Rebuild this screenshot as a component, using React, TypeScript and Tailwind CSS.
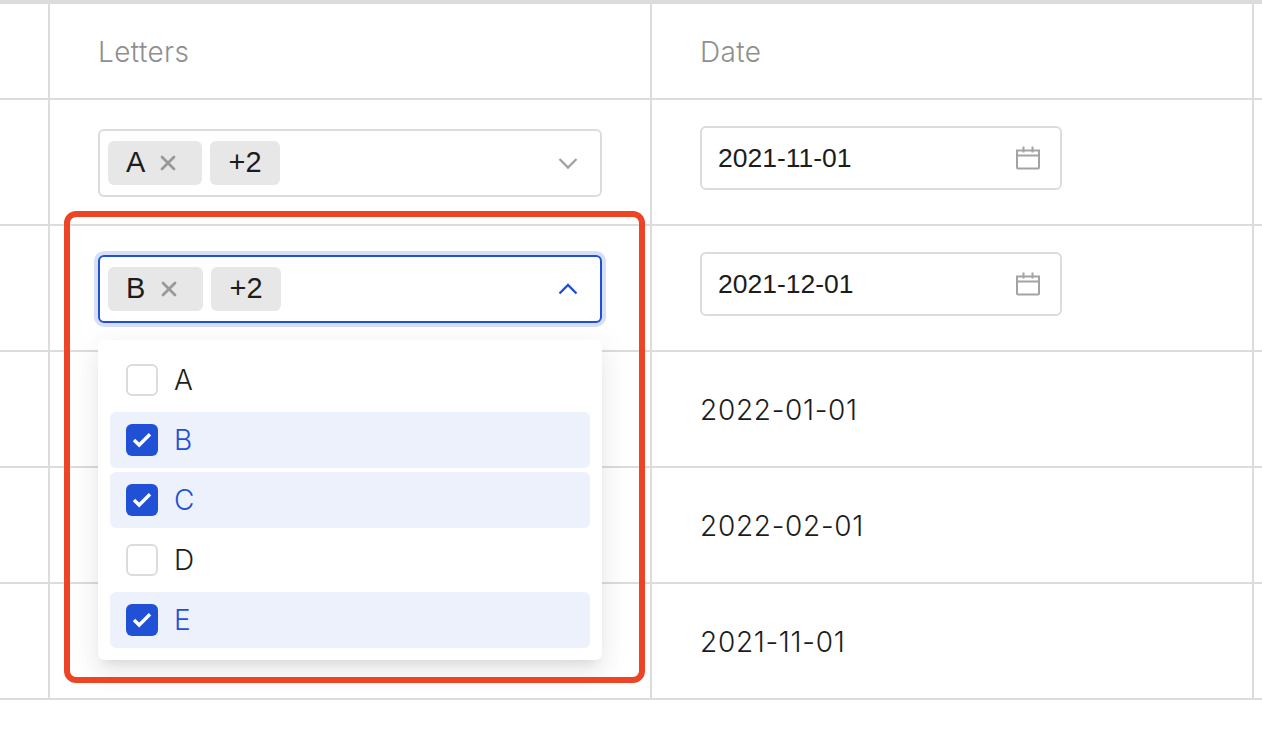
import { X } from 'lucide-react'

const sans = "font-['Inter','Liberation_Sans',sans-serif]"
const arial = "font-['Liberation_Sans',Arial,sans-serif]"

const options = [
  { label: 'A', checked: false },
  { label: 'B', checked: true },
  { label: 'C', checked: true },
  { label: 'D', checked: false },
  { label: 'E', checked: true },
]

function Chevron({ up }: { up?: boolean }) {
  return (
    <svg width="24" height="24" viewBox="0 0 24 24" fill="none" className={up ? 'text-[#2050d6]' : 'text-[#a3a3a3]'}>
      <path d={up ? 'M3.5 16.5 12 8l8.5 8.5' : 'M3.5 8 12 16.5 20.5 8'} stroke="currentColor" strokeWidth="2.4" />
    </svg>
  )
}

function CalendarIcon() {
  return (
    <svg width="26" height="26" viewBox="0 0 26 26" fill="none" className="text-[#a3a3a3]">
      <path d="M2 5.5h22v17a1 1 0 0 1-1 1H3a1 1 0 0 1-1-1v-17z" stroke="currentColor" strokeWidth="2" />
      <path d="M2 10.5h22M8.5 1.5v6M17.5 1.5v6" stroke="currentColor" strokeWidth="2" />
    </svg>
  )
}

function Tag({ children, width }: { children: React.ReactNode; width: string }) {
  return <span className={`flex h-11 items-center rounded-md bg-[#e7e7e7] text-[29px] text-[#1c1c1c] ${width}`}>{children}</span>
}

function MultiSelect({ letter, open }: { letter: string; open?: boolean }) {
  return (
    <div
      className={`flex h-[68px] w-[504px] items-center justify-between rounded-md border-2 bg-white pl-2 pr-5 ${
        open ? 'border-[#2050d6] ring-4 ring-[#d5e0f8]' : 'border-[#dcdcdc]'
      }`}
    >
      <div className={`flex gap-2 ${arial}`}>
        <Tag width={open ? 'w-[95px] pl-[18px]' : 'w-[94px] pl-[18px]'}>
          <span className={open ? 'w-[31px]' : 'w-[30px]'}>{letter}</span>
          <X size={24} strokeWidth={2.8} className="text-[#999999]" />
        </Tag>
        <Tag width="w-[70px] justify-center">+2</Tag>
      </div>
      <Chevron up={open} />
    </div>
  )
}

function DateInput({ value }: { value: string }) {
  return (
    <div className={`flex h-[64px] w-[362px] items-center justify-between rounded-md border-2 border-[#dcdcdc] pl-4 pr-[19px] text-[26.5px] text-[#1c1c1c] ${arial}`}>
      <span className="pt-0.5">{value}</span>
      <CalendarIcon />
    </div>
  )
}

function Dropdown() {
  return (
    <div className="absolute left-12 top-[114px] z-10 flex w-[504px] flex-col gap-1 rounded-md bg-white p-3 shadow-[0_6px_30px_5px_rgba(0,0,0,0.05),0_16px_24px_2px_rgba(0,0,0,0.04),0_8px_10px_-5px_rgba(0,0,0,0.08)]">
      {options.map((o) => (
        <div key={o.label} className={`flex h-14 items-center gap-4 rounded-md pl-4 ${o.checked ? 'bg-[#ecf1fc] text-[#2050d6]' : 'text-[#1c1c1c]'}`}>
          {o.checked ? (
            <span className="flex size-8 items-center justify-center rounded-md bg-[#2050d6]">
              <svg width="20" height="16" viewBox="0 0 20 16" fill="none">
                <path d="M2 8l5.2 5L18 2.2" stroke="white" strokeWidth="3.4" />
              </svg>
            </span>
          ) : (
            <span className="size-8 rounded-md border-2 border-[#dcdcdc] bg-white" />
          )}
          <span className={`text-[28px] font-light ${sans}`}>{o.label}</span>
        </div>
      ))}
    </div>
  )
}

const cell = 'border-b-2 border-r-2 border-[#dcdcdc]'
const tail = 'border-b-2 border-[#dcdcdc]'

export default function App() {
  return (
    <div className={`relative h-[730px] w-[1262px] overflow-hidden bg-white ${sans}`}>
      <div className="h-1 bg-[#dcdcdc]" />
      <div className="grid grid-cols-[50px_602px_602px_8px] grid-rows-[96px_126px_126px_116px_116px_116px]">
        <div className={cell} />
        <div className={`${cell} flex items-center pl-12 pt-0.5 text-[28px] font-light tracking-[0.4px] text-[#8f8f8f]`}>Letters</div>
        <div className={`${cell} flex items-center pl-12 pt-0.5 text-[28px] font-light tracking-[0.4px] text-[#8f8f8f]`}>Date</div>
        <div className={tail} />

        <div className={cell} />
        <div className={`${cell} pl-12 pt-[29px]`}>
          <MultiSelect letter="A" />
        </div>
        <div className={`${cell} pl-12 pt-[26px]`}>
          <DateInput value="2021-11-01" />
        </div>
        <div className={tail} />

        <div className={cell} />
        <div className={`${cell} relative pl-12 pt-[29px]`}>
          <MultiSelect letter="B" open />
          <Dropdown />
        </div>
        <div className={`${cell} pl-12 pt-[26px]`}>
          <DateInput value="2021-12-01" />
        </div>
        <div className={tail} />

        {['2022-01-01', '2022-02-01', '2021-11-01'].map((d) => (
          <div key={d} className="contents">
            <div className={cell} />
            <div className={cell} />
            <div className={`${cell} flex items-center pl-12 pt-0.5 text-[28px] font-light tracking-[0.7px] text-[#1c1c1c]`}>{d}</div>
            <div className={tail} />
          </div>
        ))}
      </div>
      <div className="pointer-events-none absolute left-[64px] top-[211px] z-20 h-[472px] w-[581px] rounded-xl border-[6px] border-[#ee4426]" />
    </div>
  )
}
